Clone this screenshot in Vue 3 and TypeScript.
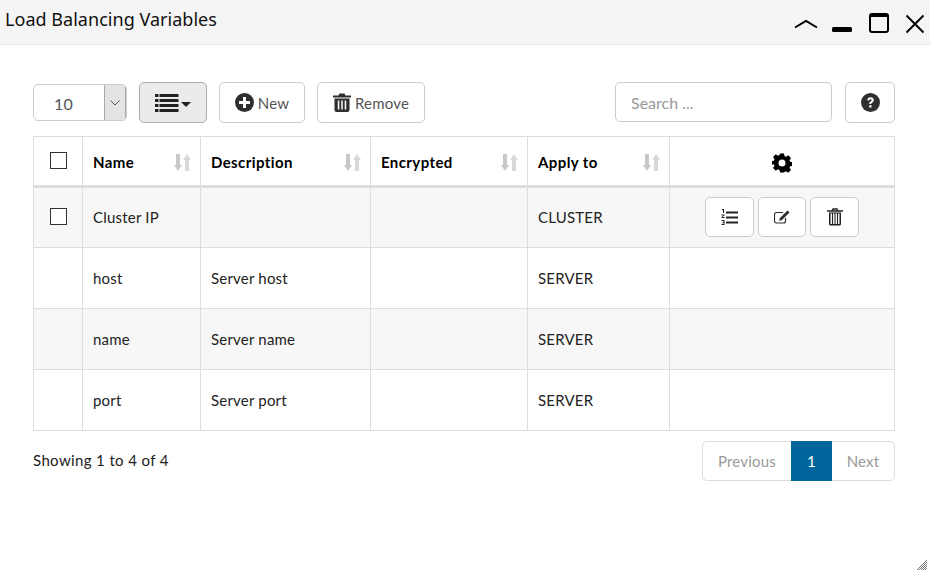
<script setup lang="ts">
interface Row {
  name: string
  description: string
  applyTo: string
  editable: boolean
}

const columns = ['Name', 'Description', 'Encrypted', 'Apply to']

const rows: Row[] = [
  { name: 'Cluster IP', description: '', applyTo: 'CLUSTER', editable: true },
  { name: 'host', description: 'Server host', applyTo: 'SERVER', editable: false },
  { name: 'name', description: 'Server name', applyTo: 'SERVER', editable: false },
  { name: 'port', description: 'Server port', applyTo: 'SERVER', editable: false }
]
</script>

<template>
  <div class="dialog">
    <header class="titlebar">
      <span class="title">Load Balancing Variables</span>
      <div class="window-btns">
        <svg class="win-up" width="24" height="10" viewBox="0 0 24 10"><path d="M1 8.500 12 2 23 8.500" fill="none" stroke="#000" stroke-width="2" /></svg>
        <svg class="win-min" width="20" height="5" viewBox="0 0 20 5"><rect width="20" height="5" rx="1.500" fill="#000" /></svg>
        <svg class="win-max" width="20" height="20" viewBox="0 0 20 20"><rect x="1" y="1" width="18" height="18" rx="2" fill="none" stroke="#000" stroke-width="2" /><rect x="1" y="1" width="18" height="3" fill="#000" /></svg>
        <svg class="win-close" width="20" height="20" viewBox="0 0 20 20"><path d="M1.500 1.500 18.500 18.500M18.500 1.500 1.500 18.500" stroke="#000" stroke-width="2" /></svg>
      </div>
    </header>

    <main class="content">
      <div class="toolbar">
        <div class="page-size">
          <span class="page-size-value">10</span>
          <span class="page-size-arrow">
            <svg width="10" height="6" viewBox="0 0 10 6"><path d="M.5.500 5 5 9.500.5" fill="none" stroke="#555" /></svg>
          </span>
        </div>
        <button class="btn btn-active columns-btn">
          <svg width="24" height="18" viewBox="0 0 24 18" fill="#222">
            <rect x="0" y="0" width="3.500" height="3" /><rect x="4.500" y="0" width="19" height="3" />
            <rect x="0" y="5" width="3.500" height="3" /><rect x="4.500" y="5" width="19" height="3" />
            <rect x="0" y="10" width="3.500" height="3" /><rect x="4.500" y="10" width="19" height="3" />
            <rect x="0" y="15" width="3.500" height="3" /><rect x="4.500" y="15" width="19" height="3" />
          </svg>
          <svg class="columns-caret" width="10" height="5" viewBox="0 0 10 5"><path d="M0 0H10L5 5Z" fill="#222" /></svg>
        </button>
        <button class="btn text-btn new-btn">
          <svg width="19" height="19" viewBox="0 0 19 19">
            <circle cx="9.500" cy="9.500" r="9.500" fill="#2f2f2f" />
            <path d="M8 4h3v4h4v3h-4v4H8v-4H4V8h4z" fill="#fff" />
          </svg>
          New
        </button>
        <button class="btn text-btn remove-btn">
          <svg width="18" height="19" viewBox="0 0 18 19" fill="#2f2f2f">
            <path d="M5.500 2.500 6.500 .5h5l1 2H18v2H0v-2z" />
            <path d="M1.500 5.500h15V17a2 2 0 0 1-2 2h-11a2 2 0 0 1-2-2z" />
            <path d="M4.800 7.500h1.500v9H4.800zM8.250 7.500h1.500v9h-1.500zM11.700 7.500h1.500v9h-1.500z" fill="#fff" />
          </svg>
          Remove
        </button>
        <div class="spacer"></div>
        <input class="search" type="text" placeholder="Search ..." />
        <button class="btn help-btn">
          <svg width="19" height="19" viewBox="0 0 19 19">
            <circle cx="9.500" cy="9.500" r="9.500" fill="#2f2f2f" />
            <path d="M6.300 7.300c0-1.900 1.400-3 3.300-3s3.200 1.100 3.200 2.800c0 1.500-.9 2.100-1.700 2.600-.6.400-.8.600-.8 1.300H8.200c0-1.400.5-2 1.400-2.600.7-.4 1-.7 1-1.200 0-.6-.5-1-1.100-1-.7 0-1.100.5-1.200 1.200zM8.200 12.200h2.300v2.300H8.200z" fill="#fff" />
          </svg>
        </button>
      </div>

      <table class="grid">
        <colgroup>
          <col class="c-check" /><col class="c-name" /><col class="c-desc" /><col class="c-enc" /><col class="c-apply" /><col />
        </colgroup>
        <thead>
          <tr>
            <th class="check-cell"><span class="checkbox"></span></th>
            <th v-for="col in columns" :key="col">
              <div class="th-inner">
                {{ col }}
                <svg class="sort" width="17" height="17" viewBox="0 0 17 17">
                  <path d="M2 0h4v11h2L4 17 0 11h2z" fill="#c8c8c8" />
                  <path d="M11 17h4V6h2L13 0 9 6h2z" fill="#d8d8d8" />
                </svg>
              </div>
            </th>
            <th class="gear-cell">
              <svg width="20" height="20" viewBox="0 0 20 20">
                <path fill="#000" fill-rule="evenodd" d="M8 .5h4l.5 2.600 1.500.6 2.200-1.500 2.800 2.800-1.500 2.200.6 1.500 2.400.5v3.600l-2.400.5-.6 1.500 1.500 2.200-2.800 2.800-2.200-1.500-1.500.6L12 19.500H8l-.5-2.600-1.500-.6-2.200 1.500-2.800-2.800 1.500-2.200-.6-1.500L-.5 11.800V8.200l2.400-.5.600-1.500L1 4 3.800 1.200 6 2.700l1.500-.6zM10 6.500a3.500 3.500 0 1 0 0 7 3.500 3.500 0 0 0 0-7z" />
              </svg>
            </th>
          </tr>
        </thead>
        <tbody>
          <tr v-for="row in rows" :key="row.name">
            <td class="check-cell"><span v-if="row.editable" class="checkbox"></span></td>
            <td>{{ row.name }}</td>
            <td>{{ row.description }}</td>
            <td></td>
            <td>{{ row.applyTo }}</td>
            <td class="actions-cell">
              <div v-if="row.editable" class="actions">
                <button class="btn action-btn">
                  <svg width="17" height="16" viewBox="0 0 17 16" fill="#222">
                    <rect x="5" y="2.500" width="12" height="2" /><rect x="5" y="7.500" width="12" height="2" /><rect x="5" y="12.500" width="12" height="2" />
                    <path d="M1 0h2v4H2V1H1zM.5 5.500h3v1l-2 1.500h2v1h-3v-1l2-1.500h-2zM.5 11h3v5h-3v-1h2v-1h-1v-1h1v-1h-2z" />
                  </svg>
                </button>
                <button class="btn action-btn edit-btn">
                  <svg width="16" height="14" viewBox="0 0 16 14">
                    <path d="M11.500 8v3a2 2 0 0 1-2 2h-7a2 2 0 0 1-2-2V4.500a2 2 0 0 1 2-2h6.500" fill="none" stroke="#2f2f2f" stroke-width="1.200" />
                    <path d="M13.500 .5 15.500 2.500 8 10 5 11 6 8z" fill="#2f2f2f" />
                  </svg>
                </button>
                <button class="btn action-btn">
                  <svg width="16" height="18" viewBox="0 0 16 18">
                    <path d="M0 3h16M5 3 6 1h4l1 2" fill="none" stroke="#222" stroke-width="1.300" />
                    <path d="M2 4.500h12V16a1.500 1.500 0 0 1-1.500 1.500h-9A1.500 1.500 0 0 1 2 16z" fill="#222" />
                    <path d="M3.500 5.500h1.500v10.500H3.500zM6 5.500h1.500v10.500H6zM8.500 5.500h1.500v10.500H8.500zM11 5.500h1.500v10.500H11z" fill="#f4f4f4" />
                  </svg>
                </button>
              </div>
            </td>
          </tr>
        </tbody>
      </table>

      <div class="footer">
        <span class="info">Showing 1 to 4 of 4</span>
        <nav class="pager">
          <span class="page">Previous</span>
          <span class="page current">1</span>
          <span class="page">Next</span>
        </nav>
      </div>
    </main>

    <svg class="grip" width="11" height="10" viewBox="0 0 11 10">
      <path d="M10 0 0 10M10 2 2 10M10 4 4 10M10 6 6 10M10 8 8 10" stroke="#777" fill="none" />
    </svg>
  </div>
</template>

<style>
html,
body {
  margin: 0;
  background: #fff;
}
</style>

<style scoped>
.dialog {
  position: relative;
  width: 930px;
  height: 574px;
  overflow: hidden;
  background: #fff;
  color: #222;
  font-family: Lato, "Noto Sans", sans-serif;
  font-size: 15px;
  letter-spacing: 0.2px;
}

.titlebar {
  display: flex;
  align-items: flex-start;
  justify-content: space-between;
  height: 44px;
  padding: 0 5px;
  background: #f5f5f5;
  border-bottom: 1px solid #e6e6e6;
}

.title {
  margin-top: 7px;
  font-family: "Noto Sans", sans-serif;
  font-size: 18px;
  letter-spacing: 0.03px;
  color: #111;
}

.window-btns {
  display: flex;
  align-items: flex-start;
}

.win-up {
  margin: 19px 14px 0 0;
}

.win-min {
  margin: 27px 17px 0 0;
}

.win-max {
  margin: 13px 16px 0 0;
}

.win-close {
  margin-top: 14px;
}

.content {
  padding: 37px 35px 0 33px;
}

.toolbar {
  display: flex;
  align-items: flex-start;
  height: 41px;
  margin-bottom: 13px;
}

.spacer {
  flex: 1;
}

.page-size {
  display: flex;
  width: 94px;
  height: 37px;
  margin: 2px 12px 0 0;
  box-sizing: border-box;
  border: 1px solid #ccc;
  border-radius: 5px;
  overflow: hidden;
}

.page-size-value {
  flex: 1;
  padding: 7px 0 0 20px;
  color: #555;
  font-size: 16px;
  line-height: 24px;
}

.page-size-arrow {
  display: flex;
  align-items: center;
  justify-content: center;
  width: 20px;
  background: #e3e3e3;
  border-left: 1px solid #aaa;
  border-right: 1px solid #aaa;
}

.btn {
  display: inline-flex;
  align-items: center;
  justify-content: center;
  box-sizing: border-box;
  padding: 0;
  background: #fff;
  border: 1px solid #ccc;
  border-radius: 5px;
  color: #555;
  font: inherit;
  letter-spacing: inherit;
}

.btn-active {
  background: #ebebeb;
  border-color: #adadad;
}

.columns-btn {
  gap: 2px;
  width: 68px;
  height: 41px;
  margin-right: 12px;
}

.columns-caret {
  margin-top: 4px;
}

.text-btn {
  gap: 4px;
  height: 41px;
}

.new-btn {
  width: 86px;
  margin-right: 12px;
}

.remove-btn {
  width: 108px;
}

.search {
  box-sizing: border-box;
  width: 217px;
  height: 40px;
  margin-right: 13px;
  padding: 0 15px;
  border: 1px solid #ccc;
  border-radius: 5px;
  outline: none;
  font: inherit;
  font-size: 16px;
}

.search::placeholder {
  color: #999;
}

.help-btn {
  width: 50px;
  height: 41px;
}

.grid {
  width: 862px;
  table-layout: fixed;
  border-collapse: collapse;
  border: 1px solid #ddd;
}

.c-check {
  width: 49px;
}

.c-name {
  width: 118px;
}

.c-desc {
  width: 170px;
}

.c-enc {
  width: 157px;
}

.c-apply {
  width: 142px;
}

th,
td {
  box-sizing: border-box;
  padding: 0 10px;
  border: 1px solid #ddd;
  text-align: left;
}

th {
  height: 50px;
  padding-top: 2px;
  border-bottom-width: 3px;
  color: #000;
  font-weight: 700;
  letter-spacing: 0.4px;
}

td {
  height: 61px;
}

tbody tr:first-child td {
  padding-bottom: 2px;
}

tbody tr:nth-child(odd) {
  background: #f7f7f7;
}

.th-inner {
  display: flex;
  align-items: center;
  justify-content: space-between;
}

.sort {
  margin-right: -1px;
}

.check-cell,
.gear-cell {
  text-align: center;
}

th.check-cell {
  padding: 0;
}

td.check-cell {
  padding-left: 0;
  padding-right: 0;
}

th.gear-cell {
  padding: 4px 0 0;
}

.gear-cell svg {
  display: block;
  margin: 0 auto;
}

.checkbox {
  display: inline-block;
  box-sizing: border-box;
  width: 17px;
  height: 17px;
  margin: -5px 0 0;
  vertical-align: middle;
  background: #fff;
  border: 1px solid #333;
}

.actions-cell {
  padding: 0;
}

tbody tr:first-child .actions-cell {
  padding: 0 0 1px;
}

.actions {
  display: flex;
  justify-content: center;
  gap: 4px;
}

.action-btn {
  width: 49px;
  height: 40px;
}

.edit-btn {
  width: 48px;
}

.footer {
  display: flex;
  align-items: flex-start;
  justify-content: space-between;
  margin-top: 10px;
}

.info {
  margin-top: 9px;
  line-height: 20px;
  letter-spacing: 0.37px;
}

.pager {
  display: flex;
  height: 40px;
  box-sizing: border-box;
  border: 1px solid #ddd;
  border-radius: 5px;
}

.page {
  display: flex;
  align-items: center;
  justify-content: center;
  width: 88px;
  color: #999;
}

.page:last-child {
  width: 62px;
}

.page.current {
  width: 41px;
  margin: -1px 0;
  background: #00669c;
  color: #fff;
}

.grip {
  position: absolute;
  right: 2px;
  bottom: 4px;
}
</style>
